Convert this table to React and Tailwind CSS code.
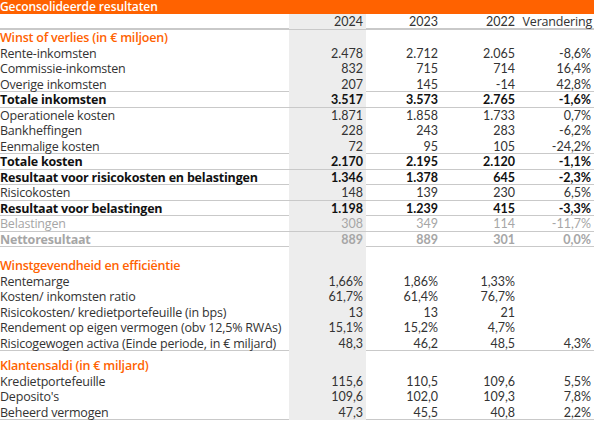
const COLS = "grid grid-cols-[289px_77px_75px_77px_76px]";

const PNL = [
  { label: "Rente-inkomsten", v: ["2.478", "2.712", "2.065", "-8,6%"] },
  { label: "Commissie-inkomsten", v: ["832", "715", "714", "16,4%"] },
  { label: "Overige inkomsten", v: ["207", "145", "-14", "42,8%"], line: true },
  { label: "Totale inkomsten", v: ["3.517", "3.573", "2.765", "-1,6%"], bold: true, line: true },
  { label: "Operationele kosten", v: ["1.871", "1.858", "1.733", "0,7%"] },
  { label: "Bankheffingen", v: ["228", "243", "283", "-6,2%"] },
  { label: "Eenmalige kosten", v: ["72", "95", "105", "-24,2%"], line: true },
  { label: "Totale kosten", v: ["2.170", "2.195", "2.120", "-1,1%"], bold: true, line: true },
  { label: "Resultaat voor risicokosten en belastingen", v: ["1.346", "1.378", "645", "-2,3%"], bold: true, line: true },
  { label: "Risicokosten", v: ["148", "139", "230", "6,5%"], line: true },
  { label: "Resultaat voor belastingen", v: ["1.198", "1.239", "415", "-3,3%"], bold: true, line: true },
  { label: "Belastingen", v: ["308", "349", "114", "-11,7%"], muted: true, line: true },
  { label: "Nettoresultaat", v: ["889", "889", "301", "0,0%"], muted: true, bold: true, line: true },
];

const RATIOS = [
  { label: "Rentemarge", v: ["1,66%", "1,86%", "1,33%", ""] },
  { label: "Kosten/ inkomsten ratio", v: ["61,7%", "61,4%", "76,7%", ""] },
  { label: "Risicokosten/ kredietportefeuille (in bps)", v: ["13", "13", "21", ""] },
  { label: "Rendement op eigen vermogen (obv 12,5% RWAs)", v: ["15,1%", "15,2%", "4,7%", ""] },
  { label: "Risicogewogen activa (Einde periode, in € miljard)", v: ["48,3", "46,2", "48,5", "4,3%"], line: true },
];

const BALANCES = [
  { label: "Kredietportefeuille", v: ["115,6", "110,5", "109,6", "5,5%"] },
  { label: "Deposito's", v: ["109,6", "102,0", "109,3", "7,8%"] },
  { label: "Beheerd vermogen", v: ["47,3", "45,5", "40,8", "2,2%"], line: true },
];

const labelFont = "font-['Open_Sans',sans-serif]";
const numFont = "font-['Lato',sans-serif]";

function Row({ row }) {
  const tone = row.muted
    ? "text-[#a6a6a6]"
    : row.bold
    ? "text-[#111]"
    : "text-[#333]";
  return (
    <div
      className={`${COLS} h-[15.5px] items-center leading-[15px] ${tone} ${
        row.bold ? "font-bold" : ""
      } ${row.line ? "border-b border-[#c9c9c9]" : ""}`}
    >
      <span className={`${labelFont} text-[12.5px] tracking-[-0.2px] whitespace-nowrap`}>{row.label}</span>
      {row.v.map((v, i) => (
        <span key={i} className={`${numFont} text-[12.5px] text-right pr-[3px] ${i === 0 ? "bg-[#ededed] h-full flex items-center justify-end" : ""}`}>
          {v}
        </span>
      ))}
    </div>
  );
}

function Heading({ children }) {
  return (
    <div className={`${COLS} h-[15.5px] items-center leading-[15px]`}>
      <span className={`${labelFont} text-[12.5px] font-semibold text-[#ff6200] tracking-[-0.2px]`}>{children}</span>
      <span className="bg-[#ededed] h-full" />
    </div>
  );
}

function Spacer({ h }) {
  return (
    <div className={`${COLS} ${h}`}>
      <span />
      <span className="bg-[#ededed] h-full" />
    </div>
  );
}

export default function App() {
  return (
    <div className="w-[605px] h-[427px] bg-white overflow-hidden">
      <div className="w-[594px]">
        <div className={`h-[14px] bg-[#ff6200] text-white ${labelFont} text-[12px] font-semibold leading-[14px] tracking-[-0.1px]`}>
          Geconsolideerde resultaten
        </div>
        <div className={`${COLS} h-[16px] items-center leading-[15px] text-[#333] border-b-2 border-[#c9c9c9]`}>
          <span />
          <span className={`${numFont} text-[12.5px] text-right pr-[3px] bg-[#ededed] h-full flex items-center justify-end`}>2024</span>
          <span className={`${numFont} text-[12.5px] text-right pr-[3px]`}>2023</span>
          <span className={`${numFont} text-[12.5px] text-right pr-[3px]`}>2022</span>
          <span className={`${labelFont} text-[12.5px] text-right pr-[2px] tracking-[-0.2px]`}>Verandering</span>
        </div>
        <Heading>Winst of verlies (in € miljoen)</Heading>
        {PNL.map((r) => (
          <Row key={r.label} row={r} />
        ))}
        <Spacer h="h-[11px]" />
        <Heading>Winstgevendheid en efficiëntie</Heading>
        {RATIOS.map((r) => (
          <Row key={r.label} row={r} />
        ))}
        <Spacer h="h-[7px]" />
        <Heading>Klantensaldi (in € miljard)</Heading>
        {BALANCES.map((r) => (
          <Row key={r.label} row={r} />
        ))}
      </div>
    </div>
  );
}
